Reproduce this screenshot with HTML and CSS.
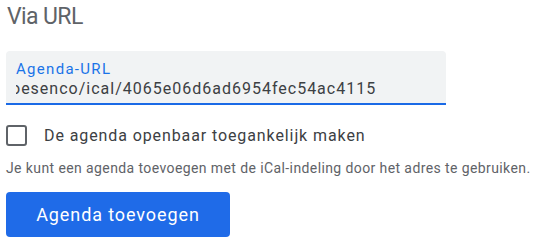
FILE: index.html
```html
<!DOCTYPE html>
<html lang="nl">
<head>
<meta charset="utf-8">
<title>Via URL</title>
<link rel="stylesheet" href="styles.css">
</head>
<body>
<main class="panel">
  <h2 class="title">Via URL</h2>
  <div class="field">
    <label class="field-label">Agenda-URL</label>
    <div class="field-value"><span class="field-text">oesenco/ical/4065e06d6ad6954fec54ac4115</span></div>
  </div>
  <label class="check-row">
    <span class="checkbox"></span>
    <span class="check-label">De agenda openbaar toegankelijk maken</span>
  </label>
  <p class="help">Je kunt een agenda toevoegen met de iCal-indeling door het adres te gebruiken.</p>
  <button class="primary">Agenda toevoegen</button>
</main>
</body>
</html>
```

FILE: styles.css
```css
html, body {
  margin: 0;
  padding: 0;
  background: #ffffff;
}
body {
  font-family: Roboto, "Liberation Sans", Arial, sans-serif;
}
.panel {
  padding: 3px 6px 0 6px;
  display: flex;
  flex-direction: column;
  align-items: flex-start;
}
.title {
  margin: 0;
  padding-left: 1px;
  font-size: 23px;
  line-height: 28px;
  font-weight: 400;
  letter-spacing: -0.6px;
  color: #5f6368;
}
.field {
  margin-top: 20px;
  width: 440px;
  height: 54px;
  box-sizing: border-box;
  background: #f1f3f4;
  border-radius: 4px 4px 0 0;
  border-bottom: 2px solid #1a6ae6;
  padding: 9px 10px 0 10px;
  display: flex;
  flex-direction: column;
}
.field-label {
  font-size: 15px;
  line-height: 18px;
  letter-spacing: 1.3px;
  color: #1a73e8;
}
.field-value {
  margin-top: 1px;
  overflow: hidden;
  white-space: nowrap;
  font-size: 16px;
  line-height: 20px;
  letter-spacing: 1px;
  color: #3c4043;
}
.field-text {
  display: inline-block;
  margin-left: -5px;
}
.check-row {
  margin-top: 20px;
  display: flex;
  align-items: flex-start;
  gap: 17px;
}
.checkbox {
  width: 21px;
  height: 21px;
  box-sizing: border-box;
  border: 2px solid #5f6368;
  border-radius: 3px;
}
.check-label {
  margin-top: 1px;
  font-size: 16px;
  line-height: 20px;
  letter-spacing: 0.9px;
  color: #3c4043;
}
.help {
  margin: 12px 0 0 0;
  font-size: 14px;
  line-height: 20px;
  letter-spacing: 0.4px;
  color: #5f6368;
}
.primary {
  margin-top: 14px;
  width: 224px;
  height: 45px;
  border: none;
  border-radius: 4px;
  background: #1f6be8;
  color: #ffffff;
  font-family: Roboto, "Liberation Sans", Arial, sans-serif;
  font-size: 18px;
  font-weight: 400;
  letter-spacing: 0.9px;
  padding: 0;
}
```
